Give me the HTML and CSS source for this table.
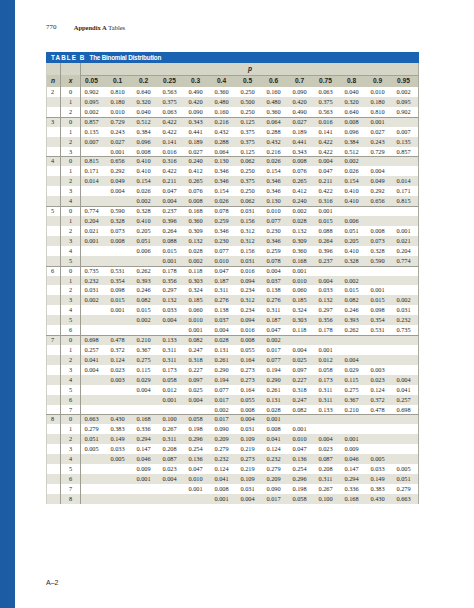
FILE: index.html
```html
<!DOCTYPE html>
<html lang="en">
<head>
<meta charset="utf-8">
<title>Table B The Binomial Distribution</title>
<link rel="stylesheet" href="styles.css">
</head>
<body>
<div class="page">
  <div class="bar"></div>
  <main class="content">
    <header class="running-head"><span class="folio">770</span><span class="appx"><b>Appendix A</b> Tables</span></header>
    <section class="tbl">
      <div class="title"><span class="label">TABLE B</span><span class="name">The Binomial Distribution</span></div>
      <div class="row hp"><span class="c1"></span><span class="c2"></span><span class="p">p</span></div>
      <div class="row hc"><span class="c1 it">n</span><span class="c2 it">x</span><span>0.05</span><span>0.1</span><span>0.2</span><span>0.25</span><span>0.3</span><span>0.4</span><span>0.5</span><span>0.6</span><span>0.7</span><span>0.75</span><span>0.8</span><span>0.9</span><span>0.95</span></div>
      <div class="tbody">
        <div class="row r"><span>2</span><span>0</span><span>0.902</span><span>0.810</span><span>0.640</span><span>0.563</span><span>0.490</span><span>0.360</span><span>0.250</span><span>0.160</span><span>0.090</span><span>0.063</span><span>0.040</span><span>0.010</span><span>0.002</span></div>
        <div class="row r"><span></span><span>1</span><span>0.095</span><span>0.180</span><span>0.320</span><span>0.375</span><span>0.420</span><span>0.480</span><span>0.500</span><span>0.480</span><span>0.420</span><span>0.375</span><span>0.320</span><span>0.180</span><span>0.095</span></div>
        <div class="row r"><span></span><span>2</span><span>0.002</span><span>0.010</span><span>0.040</span><span>0.063</span><span>0.090</span><span>0.160</span><span>0.250</span><span>0.360</span><span>0.490</span><span>0.563</span><span>0.640</span><span>0.810</span><span>0.902</span></div>

        <div class="row r g"><span>3</span><span>0</span><span>0.857</span><span>0.729</span><span>0.512</span><span>0.422</span><span>0.343</span><span>0.216</span><span>0.125</span><span>0.064</span><span>0.027</span><span>0.016</span><span>0.008</span><span>0.001</span><span></span></div>
        <div class="row r"><span></span><span>1</span><span>0.135</span><span>0.243</span><span>0.384</span><span>0.422</span><span>0.441</span><span>0.432</span><span>0.375</span><span>0.288</span><span>0.189</span><span>0.141</span><span>0.096</span><span>0.027</span><span>0.007</span></div>
        <div class="row r"><span></span><span>2</span><span>0.007</span><span>0.027</span><span>0.096</span><span>0.141</span><span>0.189</span><span>0.288</span><span>0.375</span><span>0.432</span><span>0.441</span><span>0.422</span><span>0.384</span><span>0.243</span><span>0.135</span></div>
        <div class="row r"><span></span><span>3</span><span></span><span>0.001</span><span>0.008</span><span>0.016</span><span>0.027</span><span>0.064</span><span>0.125</span><span>0.216</span><span>0.343</span><span>0.422</span><span>0.512</span><span>0.729</span><span>0.857</span></div>

        <div class="row r g"><span>4</span><span>0</span><span>0.815</span><span>0.656</span><span>0.410</span><span>0.316</span><span>0.240</span><span>0.130</span><span>0.062</span><span>0.026</span><span>0.008</span><span>0.004</span><span>0.002</span><span></span><span></span></div>
        <div class="row r"><span></span><span>1</span><span>0.171</span><span>0.292</span><span>0.410</span><span>0.422</span><span>0.412</span><span>0.346</span><span>0.250</span><span>0.154</span><span>0.076</span><span>0.047</span><span>0.026</span><span>0.004</span><span></span></div>
        <div class="row r"><span></span><span>2</span><span>0.014</span><span>0.049</span><span>0.154</span><span>0.211</span><span>0.265</span><span>0.346</span><span>0.375</span><span>0.346</span><span>0.265</span><span>0.211</span><span>0.154</span><span>0.049</span><span>0.014</span></div>
        <div class="row r"><span></span><span>3</span><span></span><span>0.004</span><span>0.026</span><span>0.047</span><span>0.076</span><span>0.154</span><span>0.250</span><span>0.346</span><span>0.412</span><span>0.422</span><span>0.410</span><span>0.292</span><span>0.171</span></div>
        <div class="row r"><span></span><span>4</span><span></span><span></span><span>0.002</span><span>0.004</span><span>0.008</span><span>0.026</span><span>0.062</span><span>0.130</span><span>0.240</span><span>0.316</span><span>0.410</span><span>0.656</span><span>0.815</span></div>

        <div class="row r g"><span>5</span><span>0</span><span>0.774</span><span>0.590</span><span>0.328</span><span>0.237</span><span>0.168</span><span>0.078</span><span>0.031</span><span>0.010</span><span>0.002</span><span>0.001</span><span></span><span></span><span></span></div>
        <div class="row r"><span></span><span>1</span><span>0.204</span><span>0.328</span><span>0.410</span><span>0.396</span><span>0.360</span><span>0.259</span><span>0.156</span><span>0.077</span><span>0.028</span><span>0.015</span><span>0.006</span><span></span><span></span></div>
        <div class="row r"><span></span><span>2</span><span>0.021</span><span>0.073</span><span>0.205</span><span>0.264</span><span>0.309</span><span>0.346</span><span>0.312</span><span>0.230</span><span>0.132</span><span>0.088</span><span>0.051</span><span>0.008</span><span>0.001</span></div>
        <div class="row r"><span></span><span>3</span><span>0.001</span><span>0.008</span><span>0.051</span><span>0.088</span><span>0.132</span><span>0.230</span><span>0.312</span><span>0.346</span><span>0.309</span><span>0.264</span><span>0.205</span><span>0.073</span><span>0.021</span></div>
        <div class="row r"><span></span><span>4</span><span></span><span></span><span>0.006</span><span>0.015</span><span>0.028</span><span>0.077</span><span>0.156</span><span>0.259</span><span>0.360</span><span>0.396</span><span>0.410</span><span>0.328</span><span>0.204</span></div>
        <div class="row r"><span></span><span>5</span><span></span><span></span><span></span><span>0.001</span><span>0.002</span><span>0.010</span><span>0.031</span><span>0.078</span><span>0.168</span><span>0.237</span><span>0.328</span><span>0.590</span><span>0.774</span></div>

        <div class="row r g"><span>6</span><span>0</span><span>0.735</span><span>0.531</span><span>0.262</span><span>0.178</span><span>0.118</span><span>0.047</span><span>0.016</span><span>0.004</span><span>0.001</span><span></span><span></span><span></span><span></span></div>
        <div class="row r"><span></span><span>1</span><span>0.232</span><span>0.354</span><span>0.393</span><span>0.356</span><span>0.303</span><span>0.187</span><span>0.094</span><span>0.037</span><span>0.010</span><span>0.004</span><span>0.002</span><span></span><span></span></div>
        <div class="row r"><span></span><span>2</span><span>0.031</span><span>0.098</span><span>0.246</span><span>0.297</span><span>0.324</span><span>0.311</span><span>0.234</span><span>0.138</span><span>0.060</span><span>0.033</span><span>0.015</span><span>0.001</span><span></span></div>
        <div class="row r"><span></span><span>3</span><span>0.002</span><span>0.015</span><span>0.082</span><span>0.132</span><span>0.185</span><span>0.276</span><span>0.312</span><span>0.276</span><span>0.185</span><span>0.132</span><span>0.082</span><span>0.015</span><span>0.002</span></div>
        <div class="row r"><span></span><span>4</span><span></span><span>0.001</span><span>0.015</span><span>0.033</span><span>0.060</span><span>0.138</span><span>0.234</span><span>0.311</span><span>0.324</span><span>0.297</span><span>0.246</span><span>0.098</span><span>0.031</span></div>
        <div class="row r"><span></span><span>5</span><span></span><span></span><span>0.002</span><span>0.004</span><span>0.010</span><span>0.037</span><span>0.094</span><span>0.187</span><span>0.303</span><span>0.356</span><span>0.393</span><span>0.354</span><span>0.232</span></div>
        <div class="row r"><span></span><span>6</span><span></span><span></span><span></span><span></span><span>0.001</span><span>0.004</span><span>0.016</span><span>0.047</span><span>0.118</span><span>0.178</span><span>0.262</span><span>0.531</span><span>0.735</span></div>

        <div class="row r g"><span>7</span><span>0</span><span>0.698</span><span>0.478</span><span>0.210</span><span>0.133</span><span>0.082</span><span>0.028</span><span>0.008</span><span>0.002</span><span></span><span></span><span></span><span></span><span></span></div>
        <div class="row r"><span></span><span>1</span><span>0.257</span><span>0.372</span><span>0.367</span><span>0.311</span><span>0.247</span><span>0.131</span><span>0.055</span><span>0.017</span><span>0.004</span><span>0.001</span><span></span><span></span><span></span></div>
        <div class="row r"><span></span><span>2</span><span>0.041</span><span>0.124</span><span>0.275</span><span>0.311</span><span>0.318</span><span>0.261</span><span>0.164</span><span>0.077</span><span>0.025</span><span>0.012</span><span>0.004</span><span></span><span></span></div>
        <div class="row r"><span></span><span>3</span><span>0.004</span><span>0.023</span><span>0.115</span><span>0.173</span><span>0.227</span><span>0.290</span><span>0.273</span><span>0.194</span><span>0.097</span><span>0.058</span><span>0.029</span><span>0.003</span><span></span></div>
        <div class="row r"><span></span><span>4</span><span></span><span>0.003</span><span>0.029</span><span>0.058</span><span>0.097</span><span>0.194</span><span>0.273</span><span>0.290</span><span>0.227</span><span>0.173</span><span>0.115</span><span>0.023</span><span>0.004</span></div>
        <div class="row r"><span></span><span>5</span><span></span><span></span><span>0.004</span><span>0.012</span><span>0.025</span><span>0.077</span><span>0.164</span><span>0.261</span><span>0.318</span><span>0.311</span><span>0.275</span><span>0.124</span><span>0.041</span></div>
        <div class="row r"><span></span><span>6</span><span></span><span></span><span></span><span>0.001</span><span>0.004</span><span>0.017</span><span>0.055</span><span>0.131</span><span>0.247</span><span>0.311</span><span>0.367</span><span>0.372</span><span>0.257</span></div>
        <div class="row r"><span></span><span>7</span><span></span><span></span><span></span><span></span><span></span><span>0.002</span><span>0.008</span><span>0.028</span><span>0.082</span><span>0.133</span><span>0.210</span><span>0.478</span><span>0.698</span></div>

        <div class="row r g"><span>8</span><span>0</span><span>0.663</span><span>0.430</span><span>0.168</span><span>0.100</span><span>0.058</span><span>0.017</span><span>0.004</span><span>0.001</span><span></span><span></span><span></span><span></span><span></span></div>
        <div class="row r"><span></span><span>1</span><span>0.279</span><span>0.383</span><span>0.336</span><span>0.267</span><span>0.198</span><span>0.090</span><span>0.031</span><span>0.008</span><span>0.001</span><span></span><span></span><span></span><span></span></div>
        <div class="row r"><span></span><span>2</span><span>0.051</span><span>0.149</span><span>0.294</span><span>0.311</span><span>0.296</span><span>0.209</span><span>0.109</span><span>0.041</span><span>0.010</span><span>0.004</span><span>0.001</span><span></span><span></span></div>
        <div class="row r"><span></span><span>3</span><span>0.005</span><span>0.033</span><span>0.147</span><span>0.208</span><span>0.254</span><span>0.279</span><span>0.219</span><span>0.124</span><span>0.047</span><span>0.023</span><span>0.009</span><span></span><span></span></div>
        <div class="row r"><span></span><span>4</span><span></span><span>0.005</span><span>0.046</span><span>0.087</span><span>0.136</span><span>0.232</span><span>0.273</span><span>0.232</span><span>0.136</span><span>0.087</span><span>0.046</span><span>0.005</span><span></span></div>
        <div class="row r"><span></span><span>5</span><span></span><span></span><span>0.009</span><span>0.023</span><span>0.047</span><span>0.124</span><span>0.219</span><span>0.279</span><span>0.254</span><span>0.208</span><span>0.147</span><span>0.033</span><span>0.005</span></div>
        <div class="row r"><span></span><span>6</span><span></span><span></span><span>0.001</span><span>0.004</span><span>0.010</span><span>0.041</span><span>0.109</span><span>0.209</span><span>0.296</span><span>0.311</span><span>0.294</span><span>0.149</span><span>0.051</span></div>
        <div class="row r"><span></span><span>7</span><span></span><span></span><span></span><span></span><span>0.001</span><span>0.008</span><span>0.031</span><span>0.090</span><span>0.198</span><span>0.267</span><span>0.336</span><span>0.383</span><span>0.279</span></div>
        <div class="row r"><span></span><span>8</span><span></span><span></span><span></span><span></span><span></span><span>0.001</span><span>0.004</span><span>0.017</span><span>0.058</span><span>0.100</span><span>0.168</span><span>0.430</span><span>0.663</span></div>
      </div>
    </section>
    <footer class="foot">A–2</footer>
  </main>
</div>
</body>
</html>
```

FILE: styles.css
```css
* { box-sizing: border-box; margin: 0; padding: 0; }
html, body { width: 474px; height: 608px; background: #fff; }
body { overflow: hidden; }

.page { display: flex; height: 608px; }
.bar { flex: none; width: 15px; background: #1b5ca5; }
.content { flex: 1; padding: 22px 0 0 31px; }

.running-head {
  display: flex;
  align-items: center;
  height: 10px;
  font-family: "Liberation Serif", "Times New Roman", serif;
  color: #2a2a2a;
}
.folio { font-size: 7px; width: 27.7px; }
.appx { font-size: 6.5px; }

.tbl { margin-top: 20px; width: 373px; }

.title {
  display: flex;
  align-items: center;
  height: 11px;
  padding-left: 5px;
  background: #1a63b2;
  color: #fff;
  font-family: "Liberation Sans", Arial, sans-serif;
  font-weight: bold;
  font-size: 6.3px;
}
.title .label { letter-spacing: 1.1px; margin-right: 4px; }
.title .name { letter-spacing: -0.2px; }

.row {
  display: grid;
  grid-template-columns: 15px 20px repeat(13, 26px);
  box-shadow: inset 1px 0 0 #cfcfc6, inset -1px 0 0 #a9a99f;
}
.row > span:nth-child(1),
.row > span:nth-child(2) { border-right: 1px solid #9d9d93; }

.hp, .hc {
  height: 12px;
  font-family: "Liberation Sans", Arial, sans-serif;
  font-weight: bold;
  font-size: 6.6px;
  line-height: 12px;
  color: #1e1e1e;
}
.hp { background: #d5d5c8; }
.hc { background: #c9c9b8; }
.hp .p {
  grid-column: 3 / -1;
  text-align: center;
  font-style: italic;
  border-bottom: 1px solid #a4a498;
}
.hc > span { text-align: center; padding-right: 5px; }
.hc > span.c1, .hc > span.c2 { padding-right: 0; }
.hc .it { font-style: italic; }

.r {
  height: 9.93px;
  font-family: "Liberation Serif", "Times New Roman", serif;
  font-size: 6.3px;
  line-height: 9.93px;
  color: #262626;
  background: #fff;
}
.tbody > .r:nth-child(even) { background: #e4e4da; }
.r.g { border-top: 1px solid #9d9d93; line-height: 8.93px; }
.r > span { text-align: center; padding-right: 5px; white-space: nowrap; }
.r > span:nth-child(1) { padding-right: 1px; }
.r > span:nth-child(2) { padding-right: 0; }

.foot {
  margin-top: 74px;
  height: 10px;
  line-height: 10px;
  font-family: "Liberation Sans", Arial, sans-serif;
  font-size: 7px;
  color: #2a2a2a;
}
```
